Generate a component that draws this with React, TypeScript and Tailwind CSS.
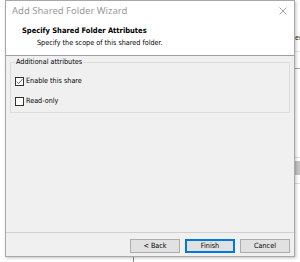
import React from "react";

const body = { fontFamily: '"DejaVu Sans Condensed", "DejaVu Sans", sans-serif' };

export default function App() {
  return (
    <div
      className="relative w-[300px] h-[262px] bg-white overflow-hidden text-[7px] text-black"
      style={{ fontFamily: '"Noto Sans", "Open Sans", sans-serif' }}
    >
      {/* background desktop bits */}
      <div className="absolute left-[-2px] top-[63px] text-[8px] leading-none text-[#333]">:</div>
      <div className="absolute left-[295px] top-[34px] text-[7px] leading-none text-[#222]">er</div>
      <div className="absolute left-[295px] top-[51px] w-[6px] h-px bg-[#e4e4e4]" />
      <div className="absolute left-[295px] top-[68px] w-[6px] h-px bg-[#a8a8a8]" />
      <div className="absolute left-[295px] top-[157px] w-[6px] h-px bg-[#dcdcdc]" />
      <div className="absolute left-[295px] top-[161px] w-[6px] h-[14px] bg-[#c4c4c4]" />
      <div className="absolute left-[295px] top-[183px] w-[6px] h-px bg-[#dcdcdc]" />
      <div className="absolute left-[133px] top-[257px] w-px h-[6px] bg-[#8a8a8a]" />

      {/* dialog window */}
      <div className="absolute left-[5px] top-0 w-[290px] h-[257px] border border-[#a9a9a9] shadow-[1px_1px_3px_rgba(0,0,0,0.25)] bg-[#f0f0f0] flex flex-col">
        {/* title bar */}
        <div className="h-[20px] bg-white flex items-center justify-between pl-[6px] pr-[6px]">
          <span className="text-[#9a9a9a] text-[9.5px]">Add Shared Folder Wizard</span>
          <svg width="8" height="8" viewBox="0 0 8 8" className="mr-[1px]">
            <path d="M0.5 0.5 L7.5 7.5 M7.5 0.5 L0.5 7.5" stroke="#9a9a9a" strokeWidth="0.9" />
          </svg>
        </div>
        {/* header */}
        <div className="h-[35px] bg-white border-b border-[#a0a0a0] flex flex-col pl-[16px] pt-[4px]" style={body}>
          <div className="font-bold text-[7.5px] leading-[12px]">Specify Shared Folder Attributes</div>
          <div className="pl-[15px] text-[7.2px] leading-[11px]">Specify the scope of this shared folder.</div>
        </div>
        {/* body */}
        <div className="flex-1 px-[4px] pt-[6px] text-[7.2px]" style={body}>
          <div className="relative border border-[#dcdcdc] h-[51px] pt-[13px] pl-[4px]">
            <div className="absolute left-[4px] top-[-6px] bg-[#f0f0f0] px-px leading-[10px]">Additional attributes</div>
            <div className="flex items-center gap-[2px] h-[10px]">
              <div className="w-[9px] h-[9px] border border-[#333] bg-white flex items-center justify-center">
                <svg width="7" height="7" viewBox="0 0 7 7">
                  <path d="M0.7 3.6 L2.6 5.6 L6.4 1.2" stroke="#555" strokeWidth="0.9" fill="none" />
                </svg>
              </div>
              <span className="leading-[10px]">Enable this share</span>
            </div>
            <div className="flex items-center gap-[2px] h-[10px] mt-[10px]">
              <div className="w-[9px] h-[9px] border border-[#333] bg-white" />
              <span className="leading-[10px]">Read-only</span>
            </div>
          </div>
        </div>
        {/* footer */}
        <div className="h-[24px] border-t border-[#d0d0d0] flex items-start justify-end gap-[5px] pr-[4px] pt-[6px]" style={body}>
          <button className="w-[50px] h-[14px] bg-[#e1e1e1] border border-[#adadad] leading-[12px] text-[7.2px]">&lt; Back</button>
          <button className="w-[50px] h-[14px] bg-[#e1e1e1] border border-[#0078d7] shadow-[inset_0_0_0_1px_#0078d7] leading-[12px] text-[7.2px]">Finish</button>
          <button className="w-[50px] h-[14px] bg-[#e1e1e1] border border-[#adadad] leading-[12px] text-[7.2px]">Cancel</button>
        </div>
      </div>
    </div>
  );
}
